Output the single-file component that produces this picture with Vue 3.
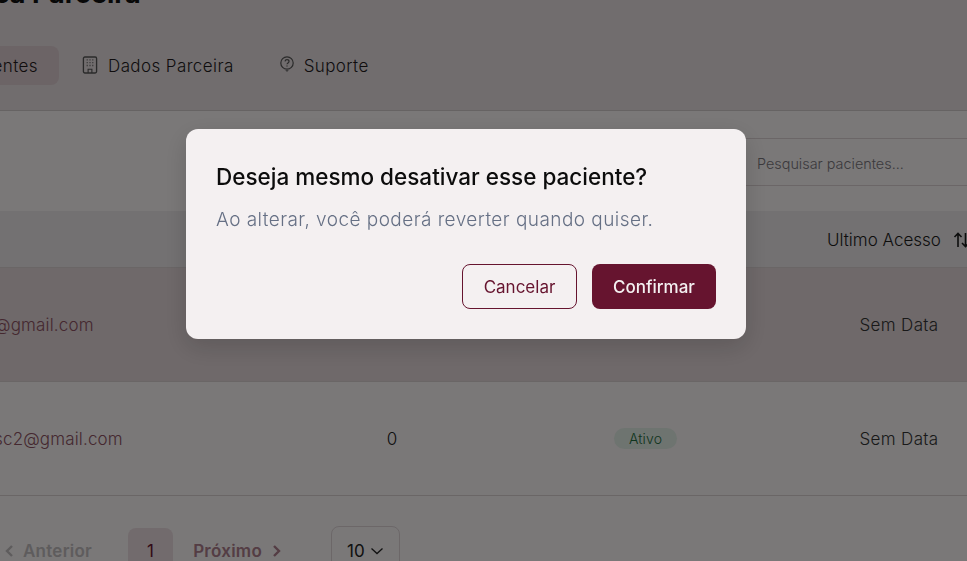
<template>
  <div class="viewport">
    <div class="page">
      <header class="top">
        <h1 class="title">Área Parceira</h1>
        <nav class="tabs">
          <a class="tab active">
            <span>Pacientes</span>
          </a>
          <a class="tab">
            <svg class="tab-icon" width="16" height="18" viewBox="0 0 17 19" fill="none" stroke="currentColor">
              <rect x="1.5" y="1" width="14" height="17" rx="1.5" stroke-width="1.4" />
              <path d="M6.5 18v-4h4v4" stroke-width="1.2" />
              <path d="M5 4h1M8 4h1M11 4h1M5 7h1M8 7h1M11 7h1M5 10h1M8 10h1M11 10h1" stroke-width="1.4" />
            </svg>
            <span>Dados Parceira</span>
          </a>
          <a class="tab">
            <svg class="tab-icon help" width="14" height="16" viewBox="0 0 14 16" fill="none" stroke="currentColor">
              <path d="M7 13.2A6.2 6.2 0 1 1 7 .8a6.2 6.2 0 0 1 0 12.4z" stroke-width="1.2" />
              <path d="M5 5.4c.2-1.1 1-1.7 2-1.7 1.2 0 2 .7 2 1.7 0 1.5-2 1.5-2 2.9" stroke-width="1.2" />
              <path d="M7 9.6v1" stroke-width="1.2" />
              <path d="M5.8 14l1.2 1.4L8.2 14" stroke-width="1" />
            </svg>
            <span>Suporte</span>
          </a>
        </nav>
      </header>

      <section class="content">
        <div class="toolbar">
          <input class="search" placeholder="Pesquisar pacientes..." />
        </div>

        <div class="table">
          <div class="row head">
            <span>Email</span>
            <span class="center">Acessos</span>
            <span class="center">Status</span>
            <span class="last-head">
              Ultimo Acesso
              <svg width="18" height="18" viewBox="0 0 18 18" fill="none" stroke="currentColor" stroke-width="1.6">
                <path d="M5 16V2.5M1.5 6L5 2.5 8.5 6" />
                <path d="M12.5 2v13.5M9 12l3.5 3.5L16 12" />
              </svg>
            </span>
          </div>
          <div v-for="p in pacientes" :key="p.email" class="row" :class="{ tinted: p.tinted }">
            <span class="email">{{ p.email }}</span>
            <span class="center count">{{ p.acessos }}</span>
            <span class="center"><em class="badge">Ativo</em></span>
            <span class="center date">{{ p.ultimo }}</span>
          </div>
        </div>

        <div class="pager">
          <span class="page-link muted">
            <svg width="10" height="14" viewBox="0 0 10 14" fill="none" stroke="currentColor" stroke-width="2.4"><path d="M8 2L3 7l5 5" /></svg>
            Anterior
          </span>
          <span class="page-num">1</span>
          <span class="page-link wine">
            Próximo
            <svg width="10" height="14" viewBox="0 0 10 14" fill="none" stroke="currentColor" stroke-width="2.4"><path d="M2 2l5 5-5 5" /></svg>
          </span>
          <span class="size">
            10
            <svg width="14" height="8" viewBox="0 0 14 8" fill="none" stroke="currentColor" stroke-width="1.3"><path d="M1.5 1.5L7 6.5l5.5-5" /></svg>
          </span>
        </div>
      </section>
    </div>

    <div class="overlay">
      <div class="modal">
        <h2>Deseja mesmo desativar esse paciente?</h2>
        <p>Ao alterar, você poderá reverter quando quiser.</p>
        <div class="actions">
          <button class="btn outline">Cancelar</button>
          <button class="btn solid">Confirmar</button>
        </div>
      </div>
    </div>
  </div>
</template>

<script setup>
const pacientes = [
  { email: 'paciente@gmail.com', acessos: 0, ultimo: 'Sem Data', tinted: true },
  { email: 'pacientesc2@gmail.com', acessos: 0, ultimo: 'Sem Data', tinted: false }
]
</script>

<style>
html,
body {
  margin: 0;
  overflow: hidden;
}
</style>

<style scoped>
.viewport {
  width: 967px;
  height: 561px;
  overflow: hidden;
  font-family: Inter, "Noto Sans", sans-serif;
  background: #f4f0f1;
}

.page {
  width: 1200px;
  margin: -24px 0 0 -120px;
}

.top {
  background: #e2dadc;
  border-bottom: 1px solid #ccc6c7;
}

.title {
  height: 36px;
  margin: 0;
  padding-left: 83px;
  font-size: 27px;
  line-height: 36px;
  font-weight: 700;
  color: #111;
}

.tabs {
  display: flex;
  align-items: center;
  gap: 4px;
  height: 39px;
  padding: 34px 0 25px 40px;
  color: #1f1a1c;
  font-size: 17px;
  font-weight: 300;
  letter-spacing: 0.4px;
}

.tab {
  display: flex;
  align-items: center;
  gap: 10px;
  height: 39px;
  padding: 0 21px;
  border-radius: 8px;
}

.active {
  justify-content: flex-end;
  width: 139px;
  box-sizing: border-box;
  margin-right: -2px;
  background: #d9c8cc;
}

.tab-icon {
  color: #555;
  margin-top: -2px;
}

.help {
  margin-top: -4px;
}

.content {
  padding-top: 27px;
}

.toolbar {
  display: flex;
  justify-content: flex-end;
  height: 48px;
}

.search {
  width: 340px;
  box-sizing: border-box;
  padding: 2px 12px 0 17px;
  border: 0;
  border-top: 1px solid #d6ccce;
  border-bottom: 1px solid #d6ccce;
  background: transparent;
  font: inherit;
  font-size: 14.4px;
  font-weight: 300;
}

.search::placeholder {
  color: #77747a;
}

.table {
  margin-top: 25px;
}

.row {
  display: grid;
  grid-template-columns: 372px 200px 307px 200px 140px;
  align-items: center;
  height: 113px;
  padding-left: 40px;
  border-bottom: 1px solid #d4cccd;
  font-size: 17px;
  font-weight: 300;
  letter-spacing: 0.15px;
}

.head {
  height: 54px;
  padding-top: 2px;
  background: #e6e2e4;
  color: #1b1b1b;
  letter-spacing: 0;
}

.tinted {
  background: #ded2d4;
}

.center {
  text-align: center;
}

.email {
  padding-left: 5px;
  color: #8a5060;
}

.count {
  color: #222;
}

.date {
  color: #333;
  letter-spacing: 0.35px;
}

.last-head {
  display: flex;
  align-items: center;
  gap: 12px;
  white-space: nowrap;
  margin-left: 28px;
}

.badge {
  display: inline-block;
  padding: 2px 15px;
  border-radius: 12px;
  background: #dce8e0;
  color: #1f6b3d;
  font-style: normal;
  font-size: 14px;
}

.pager {
  display: flex;
  align-items: center;
  height: 50px;
  margin-top: 30px;
  padding-left: 124px;
  font-size: 17px;
  font-weight: 600;
  letter-spacing: 0.25px;
}

.page-link {
  display: flex;
  align-items: center;
  gap: 10px;
}

.muted {
  gap: 9px;
  color: #bdb9ba;
}

.wine {
  color: #a87a88;
}

.page-num {
  width: 45px;
  height: 46px;
  margin: 0 20px 0 36px;
  border-radius: 8px;
  background: #e4d6da;
  color: #66142f;
  font-weight: 400;
  text-align: center;
  line-height: 46px;
}

.size {
  display: flex;
  align-items: center;
  gap: 5px;
  box-sizing: border-box;
  width: 69px;
  height: 50px;
  margin-left: 49px;
  padding-left: 15px;
  border: 1px solid #d9cfd1;
  border-radius: 8px;
  color: #222;
  font-weight: 400;
  letter-spacing: 0;
}

.overlay {
  position: fixed;
  inset: 0;
  background: rgba(0, 0, 0, 0.5);
}

.modal {
  box-sizing: border-box;
  width: 560px;
  height: 210px;
  margin: 129px 0 0 186px;
  padding: 30px;
  border-radius: 12px;
  background: #f4f0f1;
  box-shadow: 0 8px 24px rgba(0, 0, 0, 0.15);
}

.modal h2 {
  margin: 0;
  font-size: 22.5px;
  line-height: 36px;
  font-weight: 500;
  color: #0c0c0c;
}

.modal p {
  margin: 10px 0 0;
  font-size: 19px;
  line-height: 30px;
  font-weight: 300;
  letter-spacing: 0.45px;
  color: #667085;
}

.actions {
  display: flex;
  justify-content: flex-end;
  gap: 15px;
  margin-top: 29px;
}

.btn {
  height: 45px;
  box-sizing: border-box;
  border-radius: 8px;
  font: inherit;
  font-size: 17px;
  font-weight: 400;
}

.outline {
  width: 115px;
  border: 1px solid #66142f;
  background: transparent;
  color: #66142f;
}

.solid {
  width: 124px;
  border: 0;
  background: #66142f;
  color: #f4f0f1;
  font-weight: 500;
}
</style>
